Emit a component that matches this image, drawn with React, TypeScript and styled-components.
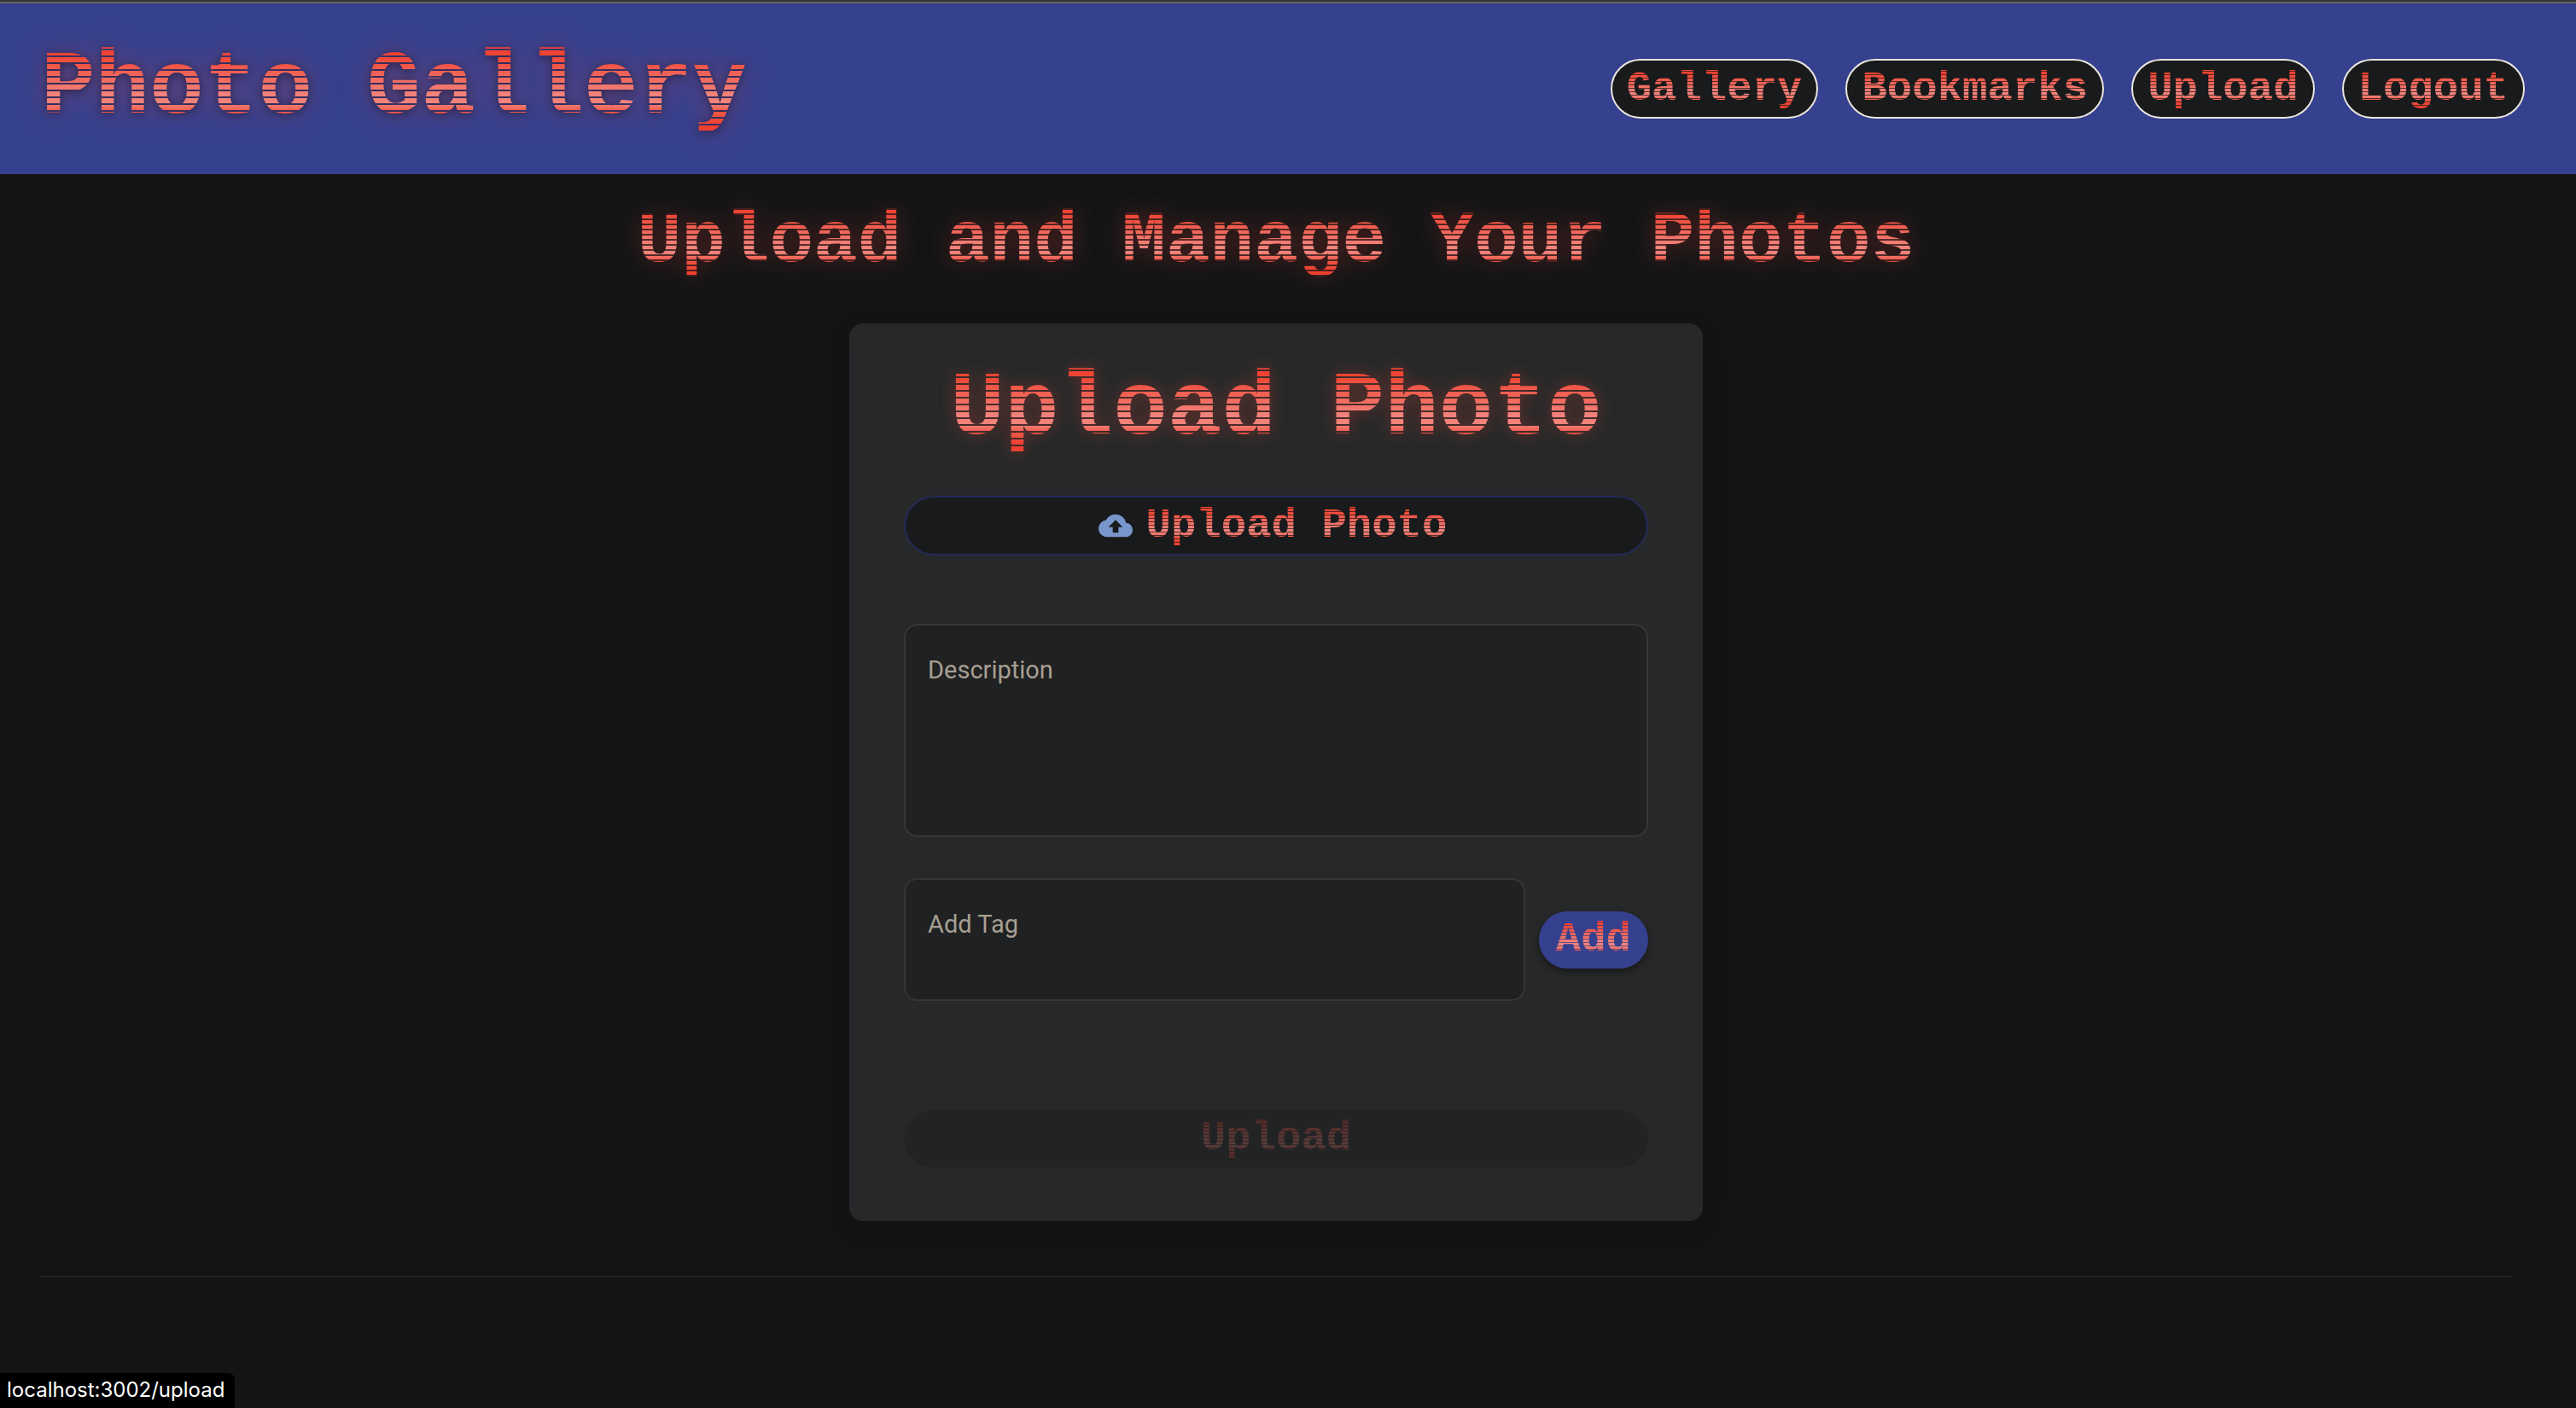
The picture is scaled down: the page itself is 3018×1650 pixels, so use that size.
import React, { useState } from "react";
import styled, { createGlobalStyle, css } from "styled-components";
import { MdCloudUpload } from "react-icons/md";

const GlobalStyle = createGlobalStyle`
  *, *::before, *::after { box-sizing: border-box; }
  body {
    margin: 0;
    background: #131416;
    font-family: Roboto, "Liberation Sans", sans-serif;
  }
  h1, h2, h3 { margin: 0; }
`;

type RetroSize = "small" | "medium" | "large";

const retroSizes = {
  small: css`
    font-size: 49px;
    mask-image: repeating-linear-gradient(#000 0 3px, #0004 3px 4px);
  `,
  medium: css`
    font-size: 86px;
    mask-image: repeating-linear-gradient(#000 0 4px, #0003 4px 6px);
  `,
  large: css`
    font-size: 106px;
    mask-image: repeating-linear-gradient(#000 0 6px, transparent 6px 8px);
  `,
};

/* Glowing terminal lettering: vertical red gradient cut by scan lines. */
const Retro = styled.span<{ $size: RetroSize }>`
  display: inline-block;
  font-family: "Liberation Mono", monospace;
  font-weight: 700;
  line-height: 1;
  white-space: nowrap;
  color: transparent;
  background-image: linear-gradient(#f04433 12%, #f2827a 56%, #f2827a 66%, #f05545 76%, #ee4030 90%);
  background-clip: text;
  -webkit-background-clip: text;
  ${({ $size }) => retroSizes[$size]}
`;

const Page = styled.div`
  min-height: 100vh;
  border-top: 2px solid #333;
`;

const Header = styled.header`
  display: flex;
  align-items: center;
  justify-content: space-between;
  height: 202px;
  padding: 0 60px 0 48px;
  background: #35408e;
  border-top: 2px solid #666;
`;

const Brand = styled.h1`
  display: flex;
  filter: drop-shadow(0 2px 6px #0008) drop-shadow(0 0 16px #f0443355);
`;

const Nav = styled.nav`
  display: flex;
  gap: 32px;
`;

const NavLink = styled.a`
  display: flex;
  align-items: center;
  height: 70px;
  padding: 0 17px;
  border: 2px solid #e9e5dd;
  border-radius: 35px;
  background: #191a1b;
  text-decoration: none;
`;

const Main = styled.main`
  display: flex;
  flex-direction: column;
  align-items: center;
  padding: 36px 74px 0 46px;
`;

const PageTitle = styled.h2`
  display: flex;
  margin-bottom: 53px;
  filter: drop-shadow(0 0 14px #f0443366);
`;

const Card = styled.form`
  display: flex;
  flex-direction: column;
  width: 100%;
  max-width: 1000px;
  padding: 48px 64px 63px;
  border-radius: 16px;
  background: #272829;
  box-shadow: 0 8px 32px #0002;
`;

const CardTitle = styled.h3`
  display: flex;
  justify-content: center;
  margin-bottom: 48px;
  filter: drop-shadow(0 0 10px #f0443366);
`;

const Button = styled.button`
  display: flex;
  align-items: center;
  justify-content: center;
  flex: none;
  height: 67px;
  padding: 0 20px;
  border: 0;
  border-radius: 34px;
  background: #35408e;
  box-shadow: 0 4px 8px #0006;
  cursor: pointer;

  &:disabled {
    background: #222324;
    box-shadow: none;
    cursor: default;
  }
  &:disabled > span {
    opacity: 0.25;
  }
`;

const PickButton = styled(Button)`
  gap: 16px;
  height: 70px;
  margin-bottom: 80px;
  padding: 0 28px 0 20px;
  border: 2px solid #242b57;
  border-radius: 35px;
  background: #191a1b;
  box-shadow: none;
`;

const CloudIcon = styled(MdCloudUpload)`
  width: 40px;
  height: 40px;
  color: #7896cc;
`;

const Field = styled.div`
  position: relative;
  display: flex;
  flex: 1;
`;

const FieldLabel = styled.label`
  position: absolute;
  top: 36px;
  left: 28px;
  font-size: 29px;
  line-height: 36px;
  color: #a79f92;
  pointer-events: none;
`;

const controlStyle = css`
  flex: 1;
  min-width: 0;
  padding: 36px 28px;
  border: 2px solid #353733;
  border-radius: 16px;
  outline: 0;
  background: #202122;
  color: #e9e5dd;
  font: 29px/36px Roboto, "Liberation Sans", sans-serif;
`;

const TextArea = styled.textarea`
  ${controlStyle}
  height: 250px;
  resize: none;
`;

const TextInput = styled.input`
  ${controlStyle}
  height: 144px;
`;

const TagRow = styled.div`
  display: flex;
  align-items: center;
  gap: 16px;
  margin: 48px 0 128px;
`;

const Divider = styled.hr`
  align-self: stretch;
  height: 2px;
  margin: 64px 0 0;
  border: 0;
  background: #1f211e;
`;

const StatusBar = styled.div`
  position: fixed;
  bottom: 0;
  left: 0;
  padding: 4px 12px 5px 8px;
  border-top-right-radius: 8px;
  background: #000;
  color: #fff;
  font: 24px/32px Inter, "Liberation Sans", sans-serif;
`;

const links = [
  { label: "Gallery", href: "/gallery" },
  { label: "Bookmarks", href: "/bookmarks" },
  { label: "Upload", href: "/upload" },
  { label: "Logout", href: "/logout" },
];

export default function App() {
  const [description, setDescription] = useState("");
  const [tag, setTag] = useState("");

  return (
    <Page>
      <GlobalStyle />
      <Header>
        <Brand>
          <Retro $size="large">Photo Gallery</Retro>
        </Brand>
        <Nav>
          {links.map((link) => (
            <NavLink key={link.href} href={link.href}>
              <Retro $size="small">{link.label}</Retro>
            </NavLink>
          ))}
        </Nav>
      </Header>
      <Main>
        <PageTitle>
          <Retro $size="medium">Upload and Manage Your Photos</Retro>
        </PageTitle>
        <Card onSubmit={(event) => event.preventDefault()}>
          <CardTitle>
            <Retro $size="large">Upload Photo</Retro>
          </CardTitle>
          <PickButton type="button">
            <CloudIcon aria-hidden="true" />
            <Retro $size="small">Upload Photo</Retro>
          </PickButton>
          <Field>
            {description === "" && <FieldLabel htmlFor="description">Description</FieldLabel>}
            <TextArea
              id="description"
              aria-label="Description"
              value={description}
              onChange={(event) => setDescription(event.target.value)}
            />
          </Field>
          <TagRow>
            <Field>
              {tag === "" && <FieldLabel htmlFor="tag">Add Tag</FieldLabel>}
              <TextInput
                id="tag"
                aria-label="Add Tag"
                value={tag}
                onChange={(event) => setTag(event.target.value)}
              />
            </Field>
            <Button type="button">
              <Retro $size="small">Add</Retro>
            </Button>
          </TagRow>
          <Button type="submit" disabled>
            <Retro $size="small">Upload</Retro>
          </Button>
        </Card>
        <Divider />
      </Main>
      <StatusBar>localhost:3002/upload</StatusBar>
    </Page>
  );
}
